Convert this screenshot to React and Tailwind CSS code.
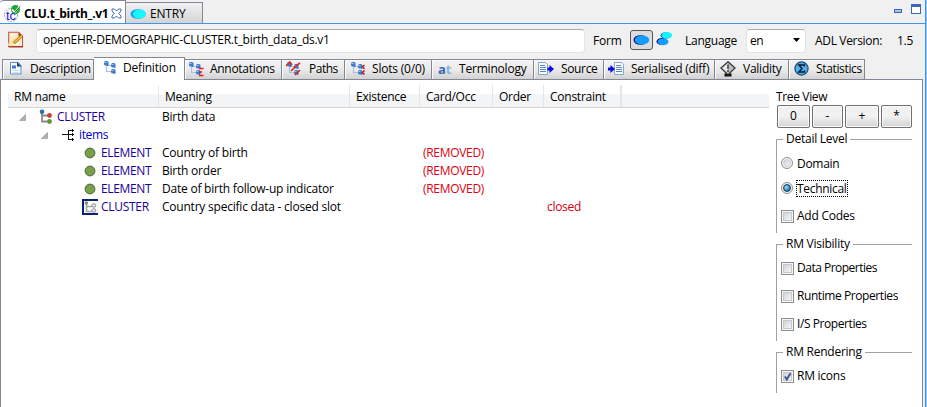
const cx = (...c) => c.filter(Boolean).join(' ');

const Svg = ({ w = 16, h = 16, className, children }) => (
  <svg width={w} height={h} viewBox={`0 0 ${w} ${h}`} className={cx('shrink-0 block', className)}>{children}</svg>
);

const ClusterBase = () => (
  <>
    <path d="M3.500 4.500V11.500H9M3.500 5.500H9" fill="none" stroke="#a9bfde" strokeWidth="1.200" />
    <rect x="1" y="1" width="4.500" height="4.500" rx="1.500" fill="#3c7fd0" />
    <rect x="8" y="3" width="4.500" height="4.500" rx="1.500" fill="#3c7fd0" />
    <rect x="8" y="9" width="4.500" height="4.500" rx="1.500" fill="#3c7fd0" />
    <path d="M1.500 2.500h2M8.500 4.500h2M8.500 10.500h2" stroke="#9ccaf8" />
    <path d="M4 5h1.500M11 7h1.500M11 13h1.500" stroke="#1d519c" />
  </>
);

const TabIcons = {
  Description: (
    <Svg>
      <path d="M1.500 1.500h8l2.500 3v8.500H1.500z" fill="#f4f9ff" stroke="#5f92cc" />
      <path d="M8 1l4.500 4.500H8z" fill="#173f7c" />
      <path d="M3 4.500h4v3H3z" fill="#3f82ca" />
      <path d="M4 9.500h6M4 11.500h6" stroke="#c9dcf1" />
    </Svg>
  ),
  Definition: <Svg><ClusterBase /></Svg>,
  Annotations: (
    <Svg>
      <ClusterBase />
      <path d="M11 7.500h4.500M11 11h3M11 14.500h4.500" stroke="#f11" strokeWidth="1.600" />
    </Svg>
  ),
  Paths: (
    <Svg>
      <ClusterBase />
      <path d="M0 5l4-4 2 3M7 8l4-4 3-2M9 14l5-5M5 10l3-3" fill="none" stroke="#dc2618" strokeWidth="1.600" />
    </Svg>
  ),
  Slots: (
    <Svg>
      <ClusterBase />
      <path d="M14.500 4l-2 2 2 2M14.500 9.500l-2 2 2 2" fill="none" stroke="#c3161c" strokeWidth="1.500" />
    </Svg>
  ),
  Terminology: (
    <span className="w-4 shrink-0 text-[13px] leading-4 font-bold text-[#3969b1]">
      a<span className="text-[#8fb0dc]">t</span>
    </span>
  ),
  Source: (
    <Svg>
      <path d="M.5 1.500h7l2 2v10H.5z" fill="#f7fbff" stroke="#8ba3c4" />
      <path d="M2 4.500h5M2 6.500h6M2 8.500h6M2 10.500h6" stroke="#5c86bb" />
      <path d="M9.500 6.500h2V4l4.500 4-4.500 4V9.500h-2z" fill="#0808e0" />
    </Svg>
  ),
  Serialised: (
    <Svg>
      <path d="M6.500 1.500h7l2 2v10h-9z" fill="#f7fbff" stroke="#8ba3c4" />
      <path d="M8 4.500h5M8 6.500h6M8 8.500h6M8 10.500h6" stroke="#5c86bb" />
      <path d="M0 6.500h2.500V4L7 8l-4.500 4V9.500H0z" fill="#0808e0" />
    </Svg>
  ),
  Validity: (
    <Svg>
      <path d="M4.500 12.500h7v3h-7z" fill="#111" />
      <path d="M8 .8l7.200 6.200L8 13.700.8 7z" fill="#bdbdbd" stroke="#333" strokeWidth="1.200" />
      <path d="M8 2.300L2.700 7 8 12z" fill="#ececec" />
      <path d="M8 3.500v4.500M8 9v2" stroke="#555" strokeWidth="1.800" />
    </Svg>
  ),
  Statistics: (
    <Svg>
      <circle cx="7.500" cy="7.500" r="6.600" fill="#4bb1f0" stroke="#24466b" strokeWidth="1.200" />
      <path d="M10.500 5.500V4H4.800L8 7.500 4.800 11h5.700V9.500" fill="none" stroke="#08182c" strokeWidth="1.400" />
    </Svg>
  ),
};

const tabs = [
  ['Description', 'Description', 'w-[92px]', 'pl-[6px] gap-[5px]', 'tracking-[-0.3px]'],
  ['Definition', 'Definition', '', '', ''],
  ['Annotations', 'Annotations', 'w-[97px]', 'pl-[3px] gap-[6px]', 'tracking-[-0.3px]'],
  ['Paths', 'Paths', 'w-[63px]', 'pl-[4px] gap-[7px]', 'tracking-[-0.5px]'],
  ['Slots', 'Slots (0/0)', 'w-[87px]', 'pl-[5px] gap-[6px]', 'tracking-[-0.2px]'],
  ['Terminology', 'Terminology', 'w-[102px]', 'pl-[6px] gap-[5px]', 'tracking-[-0.2px]'],
  ['Source', 'Source', 'w-[70px]', 'pl-[4px] gap-[7px]', 'tracking-[-0.35px]'],
  ['Serialised', 'Serialised (diff)', 'w-[111px]', 'pl-[4px] gap-[7px]', 'tracking-[-0.25px]'],
  ['Validity', 'Validity', 'w-[74px]', 'pl-[5px] gap-[7px]', 'tracking-[-0.25px]'],
  ['Statistics', 'Statistics', 'w-[76px]', 'pl-[5px] gap-[6px]', 'tracking-[-0.35px]'],
];

const FileTabs = () => (
  <div className="flex h-[24px] shrink-0 border-b border-[#3d95ee] pr-[4px]">
    <div className="flex w-[126px] items-center rounded-tl-sm border-t border-r border-[#838794] bg-white pl-1 pt-[3px]">
      <Svg w={17} h={18}>
        <circle cx="7" cy="10" r="6.500" fill="#fff" stroke="#9a9aa8" strokeDasharray="2 1" />
        <text x="2" y="15" fontSize="13" fill="#1717e8" fontFamily="Liberation Sans">tc</text>
        <circle cx="11.500" cy="4.500" r="4.500" fill="#18a832" />
        <path d="M8 4.500l3 3 5-7" fill="none" stroke="#fff" strokeWidth="1.700" />
        <path d="M10 8.500l6-7" stroke="#075f18" />
      </Svg>
      <span className="ml-[3px] w-[84px] text-[12px] font-bold tracking-[-0.3px]">CLU.t_birth_.v1</span>
      <Svg w={11} h={11} className="ml-[3px]">
        <path d="M1 1h2.500L5.500 3 7.500 1H10v2L7.800 5.500 10 8v2H7.500l-2-2-2 2H1V8l2.200-2.500L1 3z" fill="#fff" stroke="#3a6cb0" />
      </Svg>
    </div>
    <div className="mt-[2px] flex w-[77px] items-center border-t border-r border-[#838794] bg-gradient-to-b from-[#f1f1f1] to-[#d4d4d4] pl-[4px] pt-px">
      <Svg w={17} h={12}>
        <ellipse cx="8" cy="6" rx="7.500" ry="4.800" fill="#1aa0f0" />
        <ellipse cx="9.500" cy="6" rx="6.500" ry="4.500" fill="#18f6ff" />
      </Svg>
      <span className="ml-[3px] tracking-[-0.2px]">ENTRY</span>
    </div>
    <div className="ml-auto flex gap-[9px] pt-[4px]">
      <div className="mt-[5px] h-[4px] w-[8px] border border-[#3a68c0] bg-[#a9c4ee]" />
      <div className="h-[10px] w-[10px] border border-t-[3px] border-[#3a68c0] bg-white" />
    </div>
  </div>
);

const Toolbar = () => (
  <div className="flex h-[33px] shrink-0 items-center">
    <Svg w={16} h={17} className="ml-[8px] -mt-[2px]">
      <path d="M.7 1.200h9.800l4 4v10.600H.7z" fill="#fdf1d5" stroke="#c4573c" strokeWidth="1.100" />
      <path d="M10.500 1v4.500H15z" fill="#a8351d" />
      <path d="M1 15L10 5" stroke="#fbe3ab" strokeWidth="4" />
      <path d="M6 12l8-7.500" stroke="#8a5a1c" strokeWidth="3" />
      <path d="M6.500 11.500l7.500-7" stroke="#f7b733" strokeWidth="1.800" />
      <path d="M1 15.800h14" stroke="#a01c12" />
    </Svg>
    <div className="ml-[12px] h-[24px] w-[549px] rounded-sm border border-[#e3e4ea] border-t-[#abadb3] bg-white pl-[6px] leading-[20px]">
      <span className="tracking-[-0.28px]">openEHR-DEMOGRAPHIC-CLUSTER.t_birth_data_ds.v1</span>
    </div>
    <span className="ml-[8px] w-[37px] tracking-[-0.2px]">Form</span>
    <div className="-mt-[2px] flex h-[20px] w-[23px] items-center justify-center rounded-[3px] border border-[#555] bg-[#dcdcdc]">
      <Svg w={17} h={12}>
        <ellipse cx="7.500" cy="6" rx="7" ry="4.800" fill="#05057c" />
        <ellipse cx="9" cy="6" rx="7.300" ry="4.600" fill="#159cff" />
      </Svg>
    </div>
    <Svg w={17} h={15} className="ml-[3px] -mt-[4px]">
      <ellipse cx="6" cy="10.500" rx="5.500" ry="3.600" fill="#05057c" />
      <ellipse cx="7" cy="10.800" rx="5.500" ry="3.400" fill="#159cff" />
      <ellipse cx="9.500" cy="4.500" rx="5" ry="3.300" fill="#0b65b8" />
      <ellipse cx="10.800" cy="4.300" rx="5.200" ry="3.400" fill="#10f4ff" />
    </Svg>
    <span className="ml-[12px] w-[61px] tracking-[-0.25px]">Language</span>
    <div className="flex h-[24px] w-[60px] items-center rounded-sm border border-[#e3e4ea] border-t-[#abadb3] bg-white pl-[3px]">
      <span className="tracking-[-0.4px]">en</span>
      <Svg w={8} h={5} className="ml-auto mr-[4px]"><path d="M0 0h7L3.500 4z" fill="#000" /></Svg>
    </div>
    <span className="ml-[9px] w-[82px] tracking-[-0.33px]">ADL Version:</span>
    <span className="tracking-[-0.3px]">1.5</span>
  </div>
);

const TabStrip = () => (
  <div className="flex h-[22px] shrink-0 items-end pl-[2px]">
    {tabs.map(([id, label, w, pad, track]) =>
      id === 'Definition' ? (
        <div key={id} className="relative z-10 -mb-px flex h-[23px] w-[91px] shrink-0 items-center gap-[4px] border-t border-r border-[#838794] bg-white pb-[3px] pl-[9px]">
          {TabIcons[id]}
          <span className="whitespace-nowrap tracking-[-0.2px]">{label}</span>
        </div>
      ) : (
        <div key={id} className={cx('flex h-[20px] shrink-0 items-center border-t border-r border-[#838794] bg-gradient-to-b from-[#f2f2f2] via-[#ebebeb] to-[#d2d2d2] pb-px shadow-[inset_1px_1px_0_#fafafa]', id === 'Description' && 'border-l', w, pad)}>
          {TabIcons[id]}
          <span className={cx('whitespace-nowrap', track)}>{label}</span>
        </div>
      )
    )}
  </div>
);

const columns = [
  ['RM name', 'w-[151px] pl-[6px] border-r'],
  ['Meaning', 'w-[191px] pl-[6px] border-r'],
  ['Existence', 'w-[70px] pl-[6px] border-r'],
  ['Card/Occ', 'w-[73px] pl-[6px] border-r'],
  ['Order', 'w-[51px] pl-[6px] border-r'],
  ['Constraint', 'w-[78px] pl-[6px] border-r-2'],
];

const Expander = ({ className }) => (
  <Svg w={7} h={7} className={className}><path d="M6.500.5v6h-6z" fill="#b0b0b0" stroke="#8f8f8f" strokeWidth=".6" /></Svg>
);
const ClusterIcon = () => (
  <Svg w={14} h={16}>
    <path d="M3 3v9.500h6M3 6.500h7" fill="none" stroke="#8a8a8a" strokeWidth="1.800" />
    <circle cx="3" cy="2.700" r="2.300" fill="#2d6da8" />
    <circle cx="10.500" cy="6.500" r="2.400" fill="#c5403c" />
    <circle cx="10.500" cy="12.500" r="2.400" fill="#5d9438" />
  </Svg>
);
const ItemsIcon = () => (
  <Svg w={13} h={12}>
    <path d="M0 5.500h6M6.500 1v10M7 1.500h5M7 5.500h5M7 10.500h5M10.500 0v3M10.500 4v3M10.500 9v3" fill="none" stroke="#111" />
  </Svg>
);
const ElementIcon = () => (
  <Svg w={12} h={12}><circle cx="6" cy="6" r="4.900" fill="#79a043" stroke="#4f6546" strokeWidth="1" /></Svg>
);
const SlotIcon = () => (
  <Svg w={16} h={16}>
    <path d="M16 1H1v14h15" fill="#fff" stroke="#0b2272" strokeWidth="2" />
    <path d="M4.500 4v8.500H10M4.500 7.500H10" fill="none" stroke="#a5a5a5" strokeWidth="1.600" />
    <circle cx="4.300" cy="4" r="1.800" fill="#888" />
    <circle cx="11.800" cy="6.500" r="1.900" fill="#e4e4e4" stroke="#8a8a8a" strokeWidth=".9" />
    <circle cx="11.800" cy="11.500" r="1.900" fill="#e4e4e4" stroke="#8a8a8a" strokeWidth=".9" />
  </Svg>
);

const rows = [
  { node: <><Expander className="ml-[11px]" /><span className="ml-[13px]"><ClusterIcon /></span><span className="ml-[4px] tracking-[-0.3px]">CLUSTER</span></>, meaning: 'Birth data' },
  { node: <><Expander className="ml-[33px]" /><span className="ml-[14px]"><ItemsIcon /></span><span className="ml-[4px] tracking-[-0.35px] text-[#0000d8]">items</span></> },
  ...['Country of birth', 'Birth order', 'Date of birth follow-up indicator'].map((meaning) => ({
    node: <><span className="ml-[76px]"><ElementIcon /></span><span className="ml-[5px] tracking-[-0.35px]">ELEMENT</span></>,
    meaning,
    card: '(REMOVED)',
  })),
  { node: <><span className="ml-[74px]"><SlotIcon /></span><span className="ml-[3px] tracking-[-0.3px]">CLUSTER</span></>, meaning: 'Country specific data - closed slot', constraint: 'closed' },
];

const Tree = () => (
  <div className="w-[761px] shrink-0 pt-[5px]">
    <div className="flex h-[23px] border-b border-[#d5d5d5] bg-gradient-to-b from-white from-40% to-[#f3f4f5] to-45%">
      {columns.map(([label, cls]) => (
        <div key={label} className={cx('shrink-0 border-[#e4e5e7] leading-[23px] tracking-[-0.25px]', cls)}>{label}</div>
      ))}
    </div>
    <div>
      {rows.map((r, i) => (
        <div key={i} className="flex h-[18px] items-center whitespace-nowrap">
          <div className="flex w-[154px] shrink-0 items-center text-[#1c009c]">{r.node}</div>
          <div className="w-[261px] shrink-0 tracking-[-0.22px]">{r.meaning}</div>
          <div className="w-[124px] shrink-0 tracking-[-0.3px] text-[#e00010]">{r.card}</div>
          <div className="tracking-[-0.3px] text-[#d00010]">{r.constraint}</div>
        </div>
      ))}
    </div>
  </div>
);

const Check = ({ on, label, className, track = 'tracking-[-0.25px]' }) => (
  <div className={cx('flex h-[18px] items-center', className)}>
    <div className="flex h-[13px] w-[13px] items-center justify-center border border-[#8e8f8f] bg-[#f4f4f4] p-px">
      <div className="h-[9px] w-[9px] border border-[#c5c9ce] bg-gradient-to-br from-[#cfd3d8] to-[#f6f6f6]">
        {on && <Svg w={8} h={8}><path d="M.8 3.500l2 3L6.500.3" fill="none" stroke="#40549c" strokeWidth="2" /></Svg>}
      </div>
    </div>
    <span className={cx('ml-[3px] whitespace-nowrap', track)}>{label}</span>
  </div>
);

const Radio = ({ on, label, className }) => (
  <div className={cx('flex h-[18px] items-center', className)}>
    <div className="flex h-[12px] w-[12px] items-center justify-center rounded-full border border-[#8e8f8f] bg-[#f4f4f4]">
      {on
        ? <div className="h-[8px] w-[8px] rounded-full border border-[#123a5c] bg-radial-[at_35%_35%] from-[#8fe0ff] to-[#0a4c80]" />
        : <div className="h-[8px] w-[8px] rounded-full border border-[#cdd0d4] bg-gradient-to-br from-[#cfd3d8] to-[#f6f6f6]" />}
    </div>
    <span className={cx('ml-[3px] border leading-[15px] tracking-[-0.3px]', on ? 'border-dotted border-black' : 'border-transparent')}>{label}</span>
  </div>
);

const Group = ({ title, className, children }) => (
  <div className={cx('flex w-[136px] flex-col', className)}>
    <div className="flex h-[14px] items-center">
      <div className="mt-[7px] h-[7px] w-[7px] self-start border-t border-l border-[#a0a0a0]" />
      <span className="ml-[3px] mr-[3px] whitespace-nowrap tracking-[-0.25px]">{title}</span>
      <div className="mt-px h-px flex-1 bg-[#a0a0a0]" />
    </div>
    <div className="flex-1 border-l border-[#a0a0a0] pl-[4px]">{children}</div>
  </div>
);

const SidePanel = () => (
  <div className="ml-[7px] w-[136px] shrink-0 pt-[9px]">
    <div className="h-[16px] leading-[15px] tracking-[-0.35px]">Tree View</div>
    <div className="ml-px flex h-[23px] gap-[2px]">
      {[['0', 'w-[33px]'], ['-', 'w-[31px]'], ['+', 'w-[34px]'], ['*', 'w-[31px]']].map(([t, w]) => (
        <div key={t} className={cx('flex shrink-0 items-center justify-center rounded-[2px] border border-[#707070] bg-gradient-to-b from-[#f1f1f1] from-50% to-[#d2d2d2] pb-px shadow-[inset_0_0_0_1px_#fafafa]', w)}>{t}</div>
      ))}
    </div>
    <Group title="Detail Level" className="mt-[4px] h-[101px]">
      <Radio label="Domain" className="mt-[8px]" />
      <Radio on label="Technical" className="mt-[7px]" />
      <Check label="Add Codes" className="mt-[10px]" />
    </Group>
    <Group title="RM Visibility" className="mt-[4px] h-[104px]">
      <Check label="Data Properties" className="mt-[8px]" track="tracking-[-0.5px]" />
      <Check label="Runtime Properties" className="mt-[10px]" track="tracking-[-0.42px]" />
      <Check label="I/S Properties" className="mt-[10px]" track="tracking-[-0.42px]" />
    </Group>
    <Group title="RM Rendering" className="mt-[4px] h-[48px]">
      <Check on label="RM icons" className="mt-[8px]" />
    </Group>
  </div>
);

export default function App() {
  return (
    <div className="flex h-[407px] w-[927px] overflow-hidden bg-[#f0f0f0] font-['Open_Sans','Noto_Sans',sans-serif] text-[12px] leading-[16px] text-black">
      <div className="flex w-[925px] shrink-0 flex-col">
        <FileTabs />
        <Toolbar />
        <TabStrip />
        <div className="flex w-[923px] flex-1 border-t border-r border-l border-[#838794] bg-white pl-[7px]">
          <Tree />
          <SidePanel />
        </div>
      </div>
      <div className="w-[2px] border-l border-[#3d95ee] bg-[#8fc3f7]" />
    </div>
  );
}
